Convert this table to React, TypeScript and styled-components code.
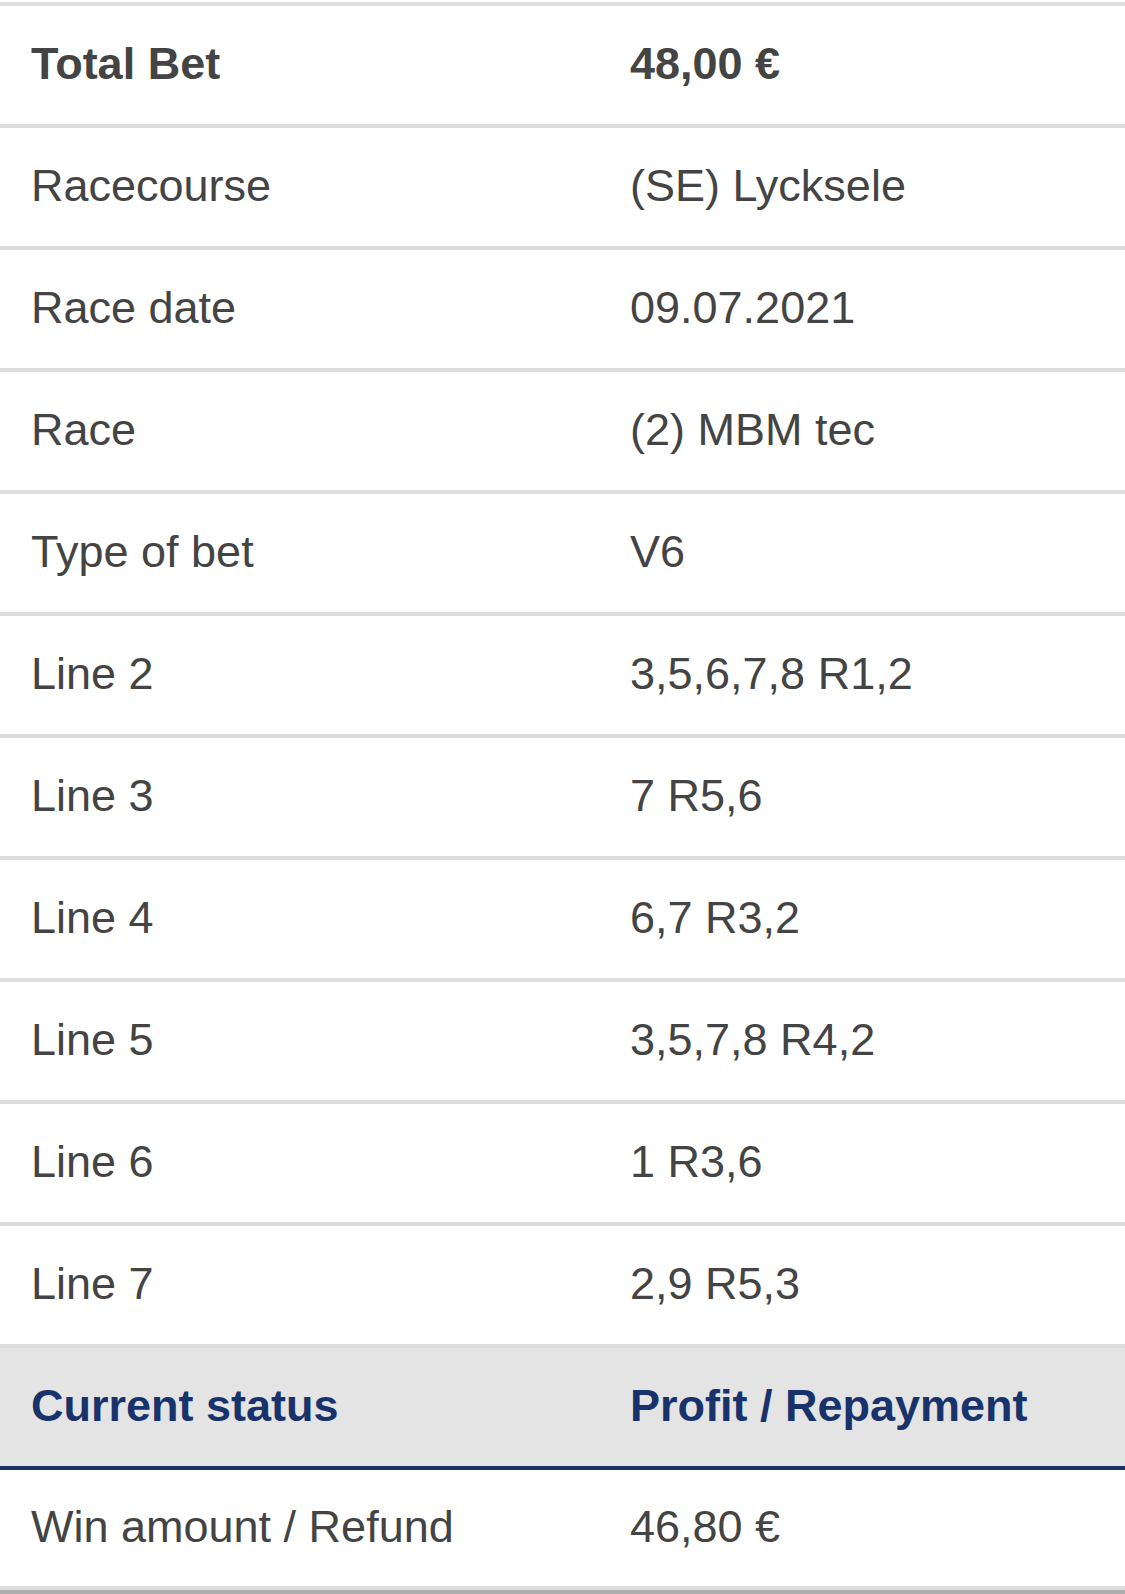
import React from "react";
import styled, { createGlobalStyle } from "styled-components";

const GlobalStyle = createGlobalStyle`
  html, body {
    margin: 0;
    padding: 0;
    background: #fff;
  }
  body {
    font-family: "Liberation Sans", Arial, Helvetica, sans-serif;
    -webkit-font-smoothing: antialiased;
  }
`;

const Table = styled.div`
  width: 100%;
  padding-top: 2px;
  color: #444;
  font-size: 45px;
`;

const Row = styled.div<{ $head?: boolean; $last?: boolean }>`
  display: grid;
  grid-template-columns: 599px 1fr;
  align-items: center;
  height: ${(p) => (p.$last ? "116px" : "118px")};
  border-top: 4px solid #dddddd;
  background: ${(p) => (p.$head ? "#e4e4e4" : "#fff")};
  ${(p) => p.$head && "border-bottom: 4px solid #18336b;"}
  ${(p) => p.$last && "border-top: none; border-bottom: 4px solid #dddddd;"}
`;

const Cell = styled.div<{ $bold?: boolean; $head?: boolean }>`
  padding-left: 31px;
  padding-bottom: 2px;
  white-space: nowrap;
  font-weight: ${(p) => (p.$bold || p.$head ? 700 : 400)};
  color: ${(p) => (p.$head ? "#18336b" : "#444")};
`;

const Footer = styled.div`
  height: 4px;
  background: #adadad;
`;

const rows: [string, string][] = [
  ["Racecourse", "(SE) Lycksele"],
  ["Race date", "09.07.2021"],
  ["Race", "(2) MBM tec"],
  ["Type of bet", "V6"],
  ["Line 2", "3,5,6,7,8 R1,2"],
  ["Line 3", "7 R5,6"],
  ["Line 4", "6,7 R3,2"],
  ["Line 5", "3,5,7,8 R4,2"],
  ["Line 6", "1 R3,6"],
  ["Line 7", "2,9 R5,3"],
];

export default function App() {
  return (
    <>
      <GlobalStyle />
      <Table>
        <Row>
          <Cell $bold>Total Bet</Cell>
          <Cell $bold>48,00 €</Cell>
        </Row>
        {rows.map(([label, value]) => (
          <Row key={label}>
            <Cell>{label}</Cell>
            <Cell>{value}</Cell>
          </Row>
        ))}
        <Row $head>
          <Cell $head>Current status</Cell>
          <Cell $head>Profit / Repayment</Cell>
        </Row>
        <Row $last>
          <Cell>Win amount / Refund</Cell>
          <Cell>46,80 €</Cell>
        </Row>
        <Footer />
      </Table>
    </>
  );
}
